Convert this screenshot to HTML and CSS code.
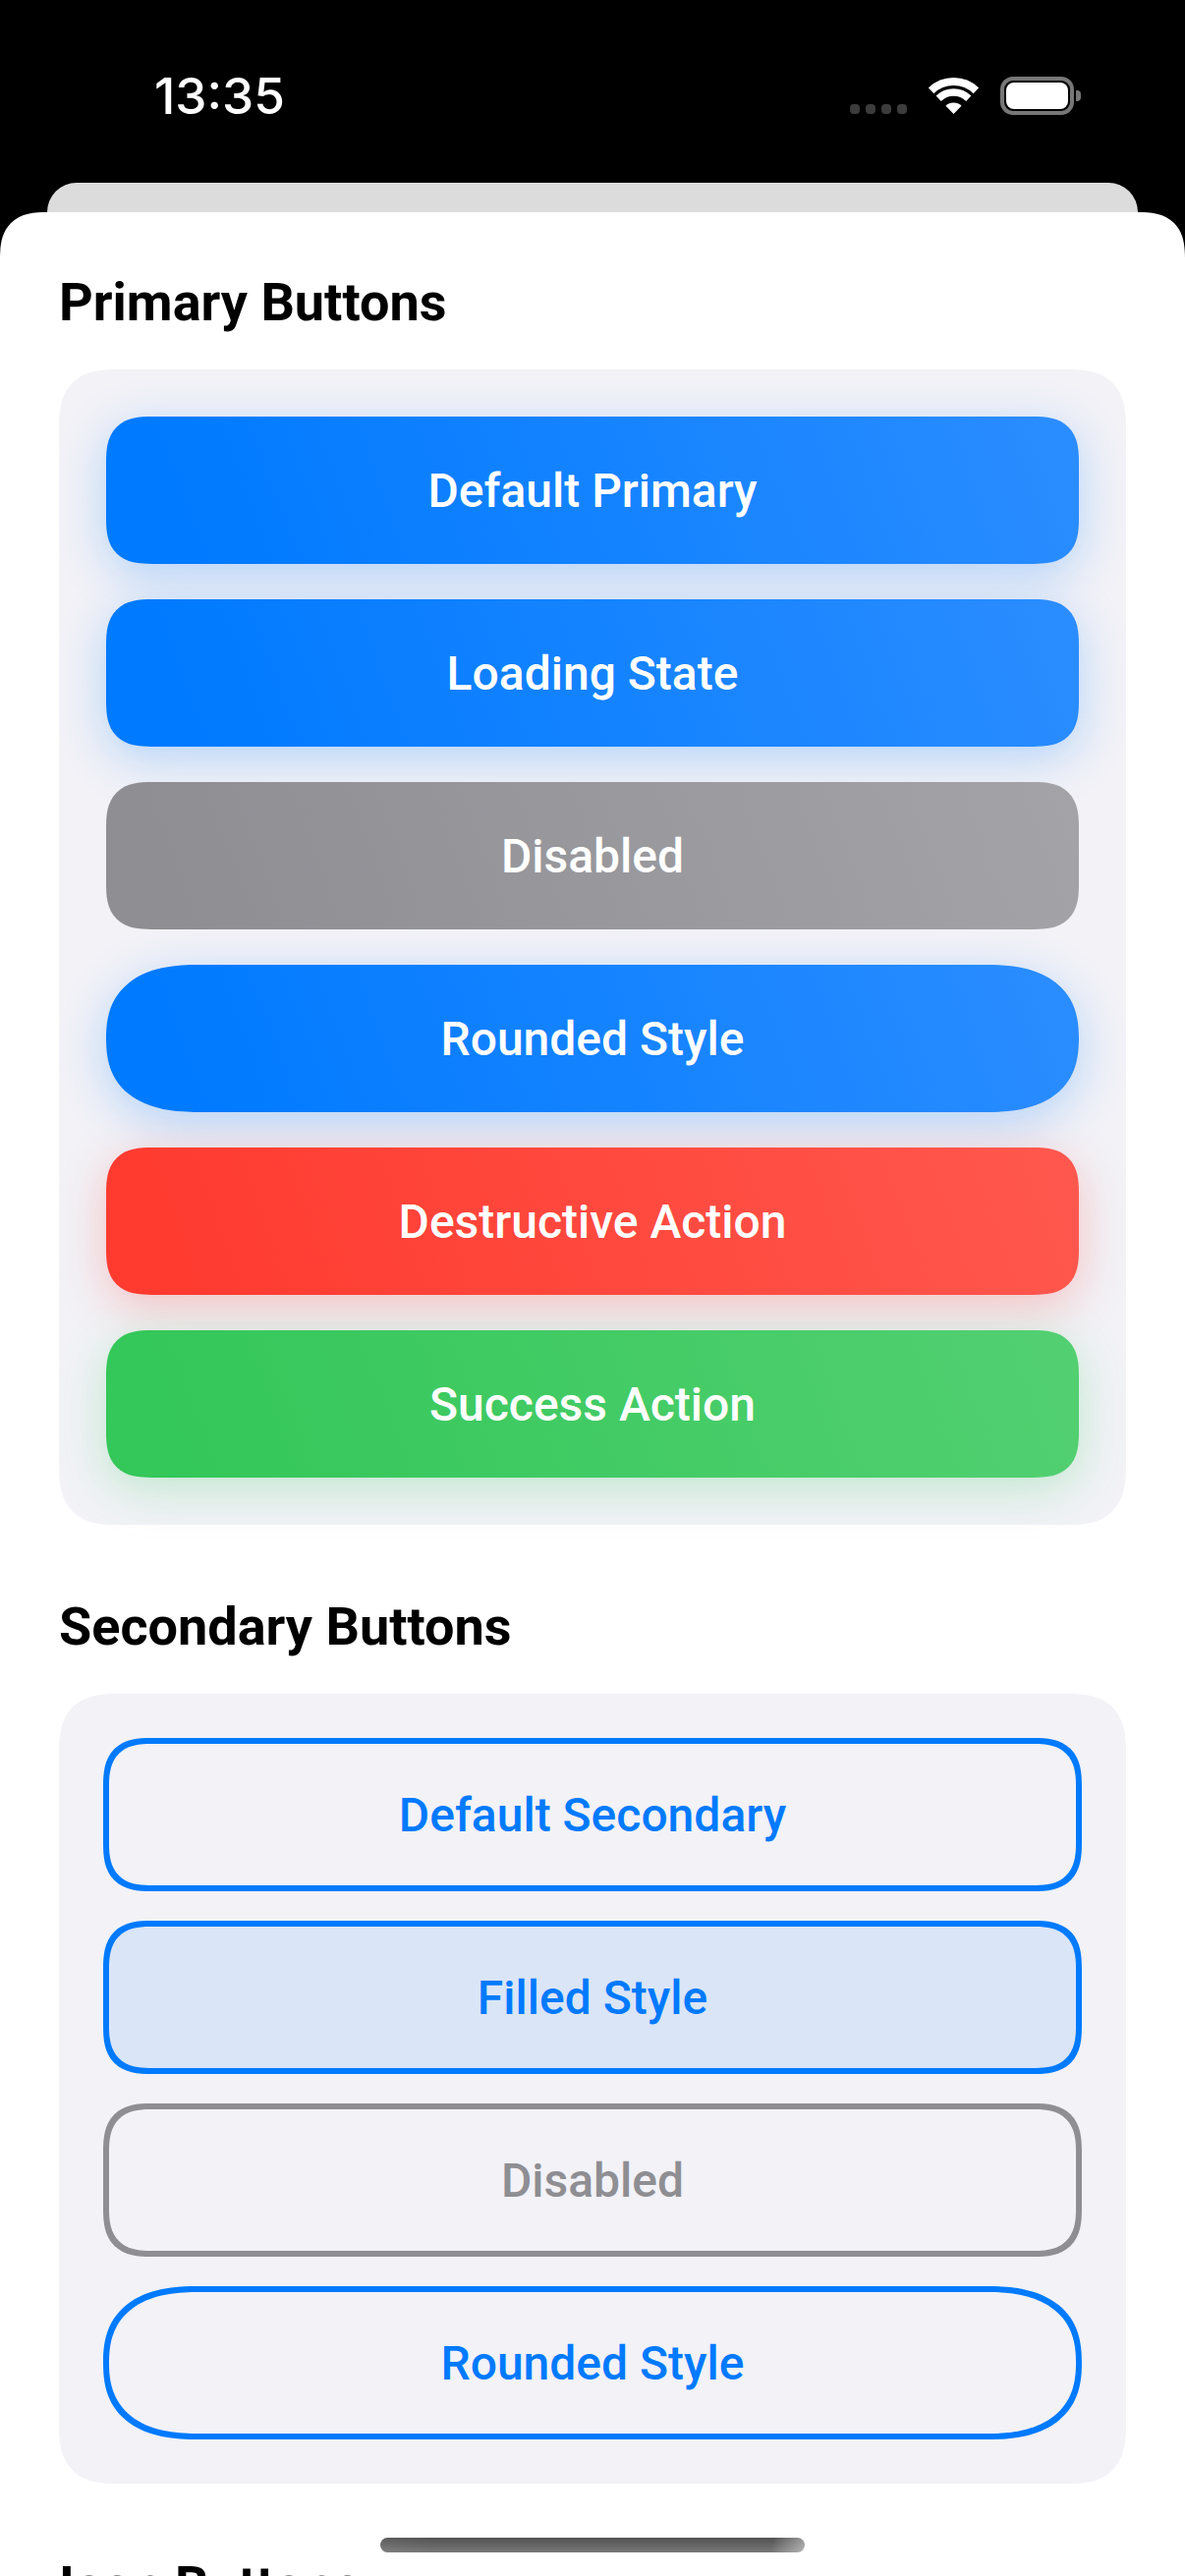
FILE: index.html
```html
<!DOCTYPE html>
<html lang="en">
<head>
<meta charset="utf-8">
<title>Buttons</title>
<link rel="stylesheet" href="styles.css">
</head>
<body>
<div class="screen">
  <header class="statusbar">
    <span class="time">13:35</span>
    <div class="status-icons">
      <div class="signal"><i></i><i></i><i></i><i></i></div>
      <svg class="wifi" viewBox="0 0 51 37" width="51" height="37" aria-hidden="true">
        <path d="M2.6 13.3A33 33 0 0 1 48.4 13.3" fill="none" stroke="#fff" stroke-width="8"/>
        <path d="M10.2 21.2A22 22 0 0 1 40.8 21.2" fill="none" stroke="#fff" stroke-width="7.5"/>
        <path d="M25.5 37L17.5 28.7A11.5 11.5 0 0 1 33.5 28.7Z" fill="#fff"/>
      </svg>
      <div class="battery"><div class="battery-body"><div class="battery-fill"></div></div><div class="battery-nub"></div></div>
    </div>
  </header>
  <div class="back-card"></div>
  <main class="sheet">
    <section class="section">
      <h2 class="heading">Primary Buttons</h2>
      <div class="card">
        <button class="btn primary">Default Primary</button>
        <button class="btn primary">Loading State</button>
        <button class="btn muted">Disabled</button>
        <button class="btn primary pill">Rounded Style</button>
        <button class="btn danger">Destructive Action</button>
        <button class="btn success">Success Action</button>
      </div>
    </section>
    <section class="section">
      <h2 class="heading">Secondary Buttons</h2>
      <div class="card">
        <button class="btn outline">Default Secondary</button>
        <button class="btn outline filled">Filled Style</button>
        <button class="btn outline off">Disabled</button>
        <button class="btn outline pill">Rounded Style</button>
      </div>
    </section>
    <section class="section">
      <h2 class="heading">Icon Buttons</h2>
    </section>
  </main>
  <div class="home-indicator"></div>
</div>
</body>
</html>
```
FILE: styles.css
```css
* { box-sizing: border-box; }
html, body { margin: 0; padding: 0; background: #000; }
.screen {
  position: relative;
  width: 1206px;
  height: 2622px;
  overflow: hidden;
  background: #000;
  font-family: Roboto, "Liberation Sans", sans-serif;
  display: flex;
  flex-direction: column;
}
.statusbar {
  height: 186px;
  flex: none;
  display: flex;
  justify-content: space-between;
  align-items: flex-start;
  padding: 0 106px 0 157px;
}
.time {
  margin-top: 66px;
  font-family: Inter, sans-serif;
  font-weight: 500;
  font-size: 51.3px;
  line-height: 62px;
  color: #fff;
}
.status-icons { display: flex; align-items: flex-start; margin-top: 78px; }
.signal { display: flex; gap: 6px; margin-top: 28px; margin-right: 22px; }
.signal i { width: 10px; height: 10px; border-radius: 4px; background: #3c3c3c; display: block; }
.wifi { display: block; margin-top: 1px; margin-right: 22px; }
.battery { display: flex; align-items: center; }
.battery-body {
  width: 75px; height: 39px; padding: 2px;
  border: 4px solid #777; border-radius: 13px;
}
.battery-fill { width: 100%; height: 100%; background: #fff; border-radius: 8px; }
.battery-nub { width: 5px; height: 11px; margin-left: 2px; background: #777; border-radius: 0 4px 4px 0; }
.back-card {
  flex: none;
  height: 30px;
  margin: 0 48px;
  background: #dcdcdd;
  border-radius: 30px 30px 0 0;
}
.sheet {
  flex: 1;
  background: #fff;
  border-radius: 39px 39px 0 0;
  padding: 60px 60px 0;
}
.section + .section { margin-top: 72px; }
.heading {
  margin: 0 0 36px;
  font-size: 54px;
  line-height: 64px;
  font-weight: 700;
  color: #000;
}
.card {
  display: flex;
  flex-direction: column;
  gap: 36px;
  padding: 48px;
  background: #f2f2f7;
  border-radius: 48px;
}
.btn {
  display: block;
  width: 100%;
  height: 150px;
  flex: none;
  padding: 0;
  border: 0;
  border-radius: 36px;
  font-family: inherit;
  font-size: 48px;
  font-weight: 500;
  color: #fff;
  text-align: center;
}
.primary { background: linear-gradient(70deg, #007aff 8%, #2b8dff 100%); box-shadow: 0 12px 48px rgba(0,122,255,.26); }
.muted { background: linear-gradient(70deg, #8e8e93 8%, #a4a4a8 100%); }
.danger { background: linear-gradient(70deg, #ff3b30 8%, #ff584e 100%); box-shadow: 0 12px 48px rgba(255,59,48,.26); }
.success { background: linear-gradient(70deg, #34c759 8%, #53d072 100%); box-shadow: 0 12px 48px rgba(52,199,89,.26); }
.pill { border-radius: 75px; }
.outline {
  background: transparent;
  color: #007aff;
  outline: 6px solid #007aff;
  outline-offset: -3px;
}
.filled { background: #dae5f7; }
.off { color: #8e8e93; outline-color: #8e8e93; }
.home-indicator {
  position: absolute;
  left: 387px;
  top: 2583px;
  width: 432px;
  height: 15px;
  border-radius: 8px;
  background: linear-gradient(100deg, rgba(255,255,255,.06) 0%, transparent 12%, transparent 92%, rgba(255,255,255,.45) 100%), linear-gradient(#525252, #787878);
}
@supports (corner-shape: superellipse(1.4)) {
  .btn { border-radius: 46px; corner-shape: superellipse(1.4); }
  .btn.pill { border-radius: 94px / 75px; corner-shape: superellipse(1.3); }
  .card { border-radius: 60px; corner-shape: superellipse(1.4); }
  .sheet { border-radius: 48px 48px 0 0; corner-shape: superellipse(1.4); }
}
```
